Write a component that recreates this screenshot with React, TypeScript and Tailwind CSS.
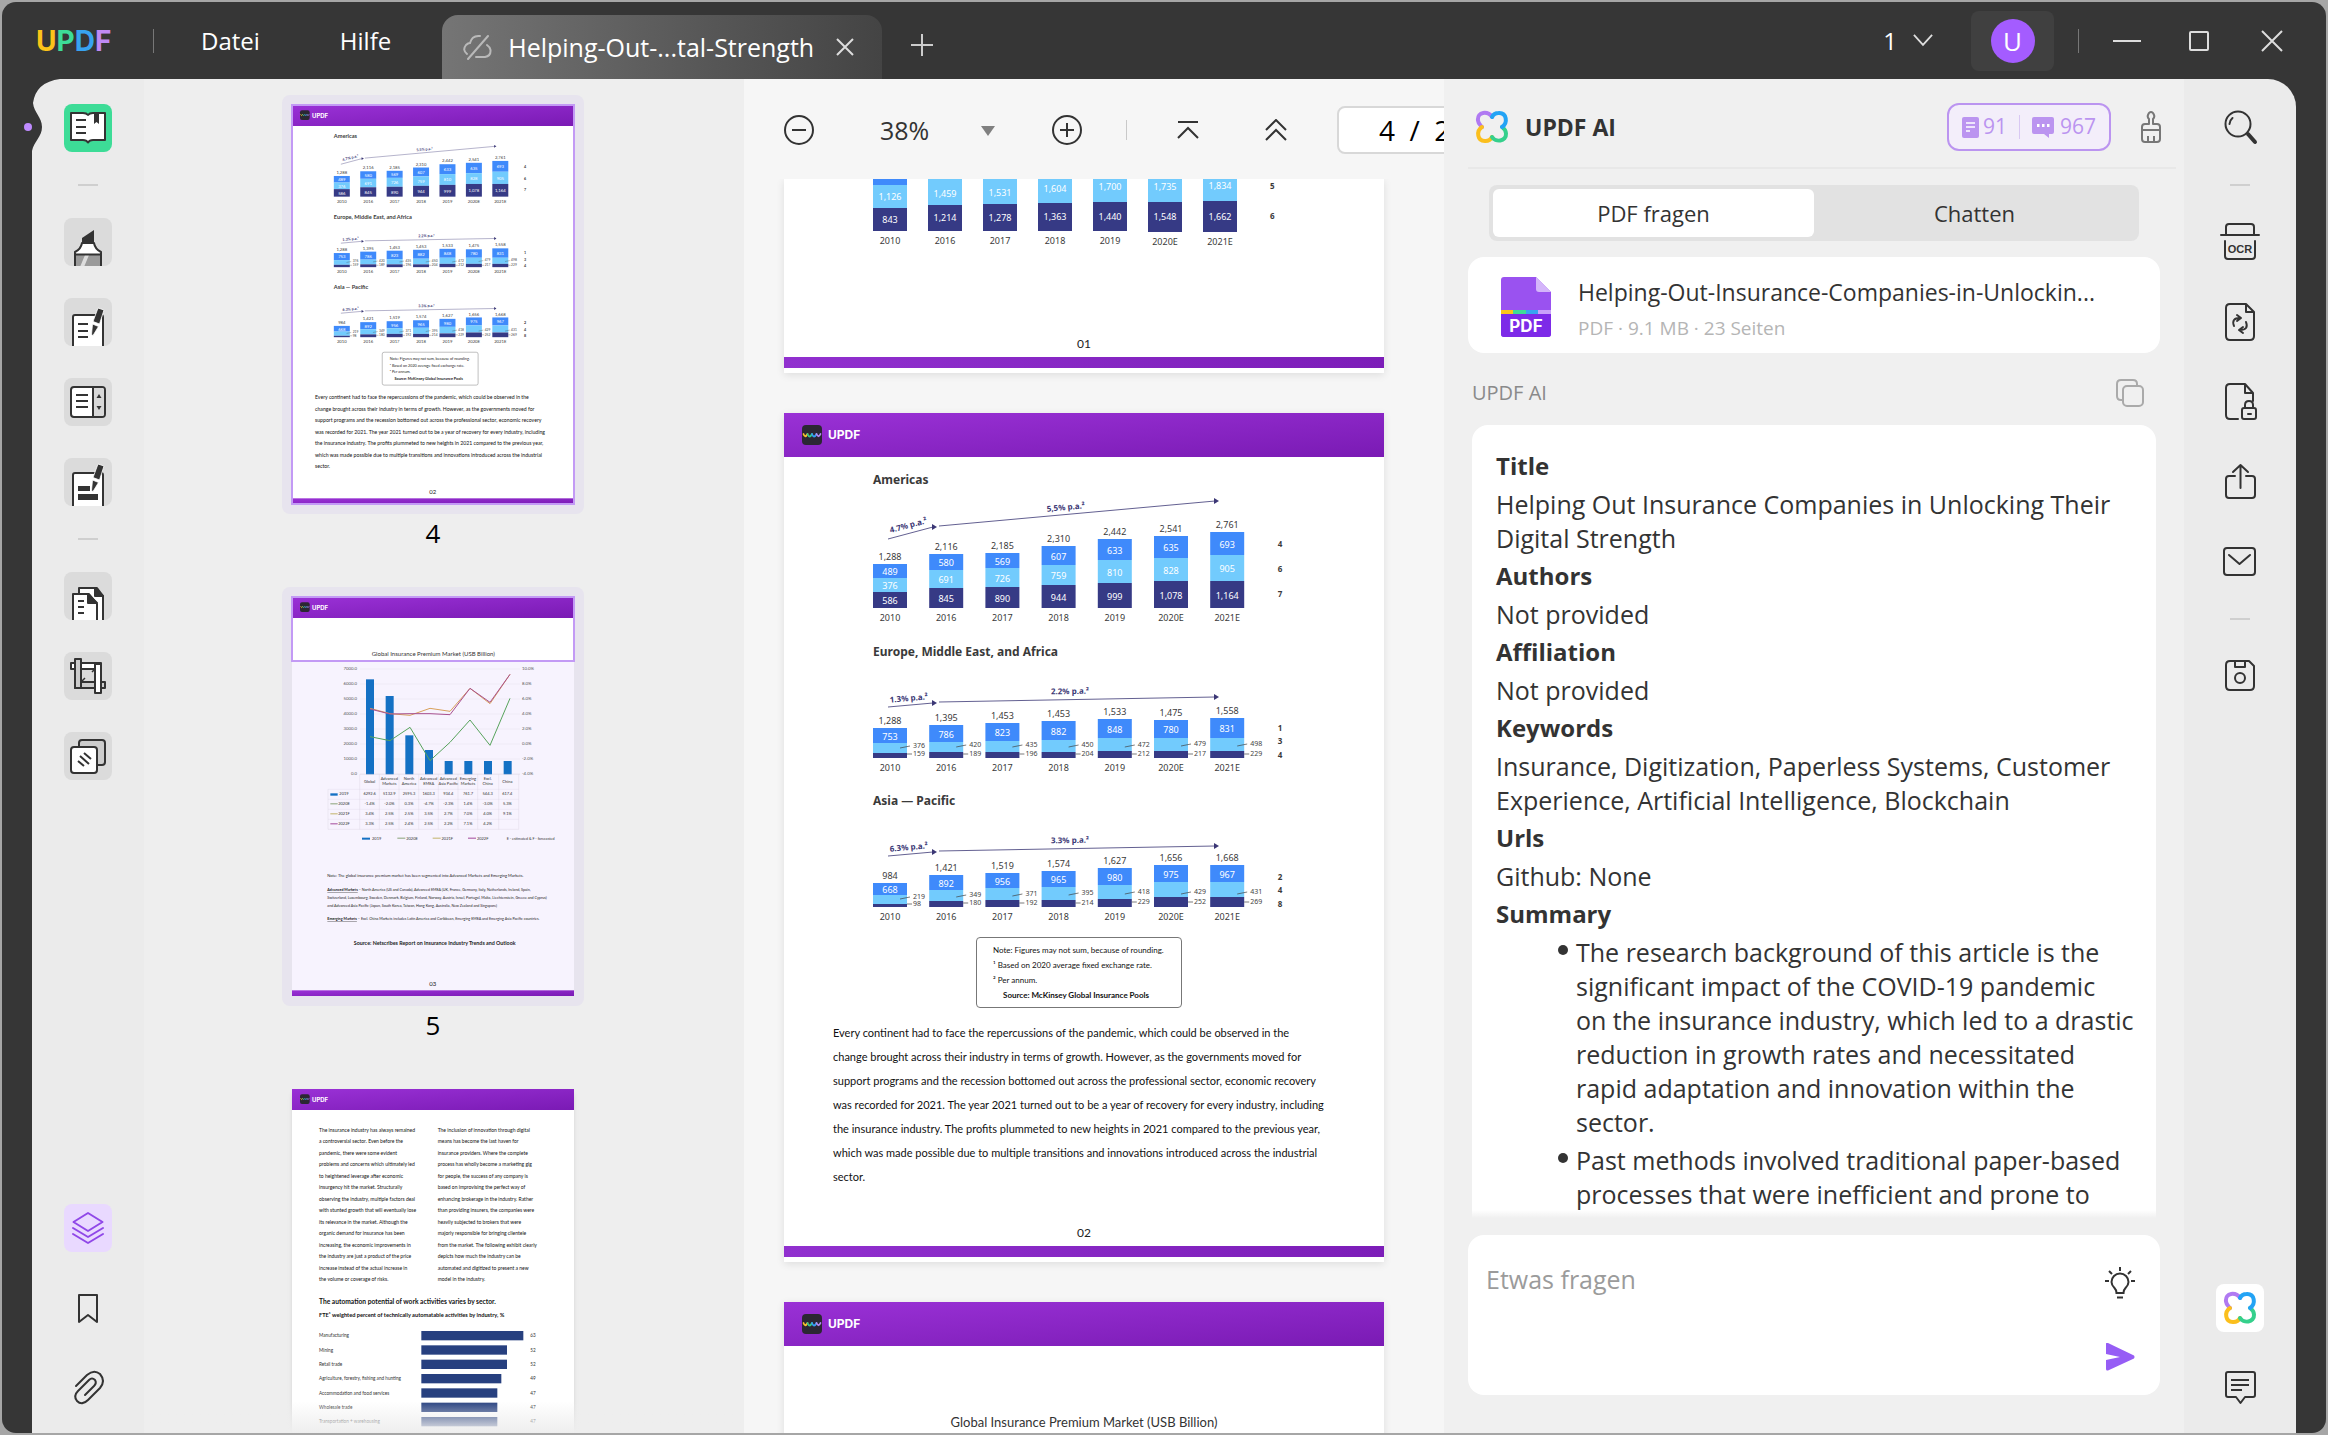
import { useState, type ReactNode } from 'react';

const SANS = "font-['Open_Sans','Noto_Sans',sans-serif]";

/* ---------- document data ---------- */

type Bar = { year: string; total: string; y: [number, number, number]; v: [string, string, string]; note?: [number, number] };
type Region = { title: string; top: number; base: number; growth: [string, string]; side: [string, string, string]; sideY: [number, number, number]; bars: Bar[] };

const regions: Region[] = [
  {
    title: 'Americas', top: 30, base: 121, growth: ['4.7% p.a.²', '5,5% p.a.²'], side: ['4', '6', '7'], sideY: [60, 85, 110],
    bars: [
      { year: '2010', total: '1,288', y: [77, 91, 105], v: ['489', '376', '586'] },
      { year: '2016', total: '2,116', y: [67, 83, 101], v: ['580', '691', '845'] },
      { year: '2017', total: '2,185', y: [66, 81, 100], v: ['569', '726', '890'] },
      { year: '2018', total: '2,310', y: [59, 78, 98], v: ['607', '759', '944'] },
      { year: '2019', total: '2,442', y: [52, 73, 96], v: ['633', '810', '999'] },
      { year: '2020E', total: '2,541', y: [49, 71, 94], v: ['635', '828', '1,078'] },
      { year: '2021E', total: '2,761', y: [45, 68, 94], v: ['693', '905', '1,164'] },
    ],
  },
  {
    title: 'Europe, Middle East, and Africa', top: 202, base: 99, growth: ['1.3% p.a.²', '2.2% p.a.²'], side: ['1', '3', '4'], sideY: [72, 85, 99],
    bars: [
      { year: '2010', total: '1,288', y: [69, 84, 94], v: ['753', '376', '159'], note: [89, 97] },
      { year: '2016', total: '1,395', y: [66, 83, 93], v: ['786', '420', '189'], note: [88, 97] },
      { year: '2017', total: '1,453', y: [64, 82, 93], v: ['823', '435', '196'], note: [88, 97] },
      { year: '2018', total: '1,453', y: [62, 81, 93], v: ['882', '450', '204'], note: [88, 97] },
      { year: '2019', total: '1,533', y: [60, 79, 92], v: ['848', '472', '212'], note: [88, 97] },
      { year: '2020E', total: '1,475', y: [61, 79, 92], v: ['780', '479', '217'], note: [87, 97] },
      { year: '2021E', total: '1,558', y: [59, 79, 92], v: ['831', '498', '229'], note: [87, 97] },
    ],
  },
  {
    title: 'Asia — Pacific', top: 351, base: 99, growth: ['6.3% p.a.²', '3.3% p.a.²'], side: ['2', '4', '8'], sideY: [72, 85, 99],
    bars: [
      { year: '2010', total: '984', y: [75, 87, 96], v: ['668', '219', '98'], note: [91, 98] },
      { year: '2016', total: '1,421', y: [67, 82, 93], v: ['892', '349', '180'], note: [89, 97] },
      { year: '2017', total: '1,519', y: [65, 80, 92], v: ['956', '371', '192'], note: [88, 97] },
      { year: '2018', total: '1,574', y: [63, 79, 92], v: ['965', '395', '214'], note: [87, 97] },
      { year: '2019', total: '1,627', y: [60, 77, 91], v: ['980', '418', '229'], note: [86, 96] },
      { year: '2020E', total: '1,656', y: [57, 74, 89], v: ['975', '429', '252'], note: [86, 96] },
      { year: '2021E', total: '1,668', y: [57, 74, 89], v: ['967', '431', '269'], note: [86, 96] },
    ],
  },
];

const worldBars = [
  { year: '2010', y: [6, 29, 52], v: ['1,126', '843'] },
  { year: '2016', y: [0, 26, 52], v: ['1,459', '1,214'] },
  { year: '2017', y: [0, 25, 52], v: ['1,531', '1,278'] },
  { year: '2018', y: [0, 24, 52], v: ['1,604', '1,363'] },
  { year: '2019', y: [0, 23, 52], v: ['1,700', '1,440'] },
  { year: '2020E', y: [0, 23, 53], v: ['1,735', '1,548'] },
  { year: '2021E', y: [0, 22, 53], v: ['1,834', '1,662'] },
];

const paragraph = [
  'Every continent had to face the repercussions of the pandemic, which could be observed in the',
  'change brought across their industry in terms of growth. However, as the governments moved for',
  'support programs and the recession bottomed out across the professional sector, economic recovery',
  'was recorded for 2021. The year 2021 turned out to be a year of recovery for every industry, including',
  'the insurance industry. The profits plummeted to new heights in 2021 compared to the previous year,',
  'which was made possible due to multiple transitions and innovations introduced across the industrial',
  'sector.',
];

const leftColumn = [
  'The insurance industry has always remained', 'a controversial sector. Even before the', 'pandemic, there were some evident',
  'problems and concerns which ultimately led', 'to heightened leverage after economic', 'insurgency hit the market. Structurally',
  'observing the industry, multiple factors deal', 'with stunted growth that will eventually lose', 'its relevance in the market. Although the',
  'organic demand for insurance has been', 'increasing, the economic improvements in', 'the industry are just a product of the price',
  'increase instead of the actual increase in', 'the volume or coverage of risks.',
];
const rightColumn = [
  'The inclusion of innovation through digital', 'means has become the last haven for', 'insurance providers. Where the complete',
  'process has wholly become a marketing gig', 'for people, the success of any company is', 'based on improvising the perfect way of',
  'enhancing brokerage in the industry. Rather', 'than providing insurers, the companies were', 'heavily subjected to brokers that were',
  'majorly responsible for bringing clientele', 'from the market. The following exhibit clearly', 'depicts how much the industry can be',
  'automated and digitized to present a new', 'model in the industry.',
];
const sectors: [string, number, string][] = [
  ['Manufacturing', 306, '63'], ['Mining', 257, '52'], ['Retail trade', 257, '52'], ['Agriculture, forestry, fishing and hunting', 240, '49'],
  ['Accommodation and food services', 228, '47'], ['Wholesale trade', 228, '47'], ['Transportation + warehousing', 228, '47'],
];

/* ---------- document drawings ---------- */

function GrowthArrow({ x1, y1, x2, y2 }: { x1: number; y1: number; x2: number; y2: number }) {
  return (
    <g stroke="#3b3775" fill="#3b3775">
      <line x1={x1} y1={y1} x2={x2} y2={y2} strokeWidth="0.8" />
      <path d={`M${x2 - 1} ${y2 - 3}l5 3l-5 3z`} stroke="none" />
    </g>
  );
}

function RegionChart({ r }: { r: Region }) {
  const steep = r.title === 'Americas';
  return (
    <g transform={`translate(0 ${r.top})`}>
      <text x="89" y="-3" className="text-[12px] font-bold" fill="#3a3a3a">{r.title}</text>
      <GrowthArrow x1={104} y1={steep ? 52 : 48} x2={149} y2={steep ? 40 : 44} />
      <GrowthArrow x1={155} y1={steep ? 39 : 43} x2={431} y2={steep ? 14 : 38} />
      <g className="text-[8px] font-bold" fill="#3b3775" textAnchor="middle">
        <text x="125" y={steep ? 41 : 42} transform={steep ? 'rotate(-15 125 41)' : 'rotate(-5 125 42)'}>{r.growth[0]}</text>
        <text x={steep ? 282 : 286} y={steep ? 23 : 35} transform={steep ? 'rotate(-5 282 23)' : 'rotate(-1 286 35)'}>{r.growth[1]}</text>
      </g>
      {r.bars.map((b, i) => {
        const x = 89 + i * 56.2;
        const [a, c, d] = b.y;
        return (
          <g key={b.year} className="text-[9px]" textAnchor="middle" fill="#fff">
            <rect x={x} y={a} width="34" height={c - a} fill="#3f8afb" />
            <rect x={x} y={c} width="34" height={d - c} fill="#72cbfd" />
            <rect x={x} y={d} width="34" height={r.base - d} fill="#363a85" />
            <text x={x + 17} y={(a + c) / 2 + 4}>{b.v[0]}</text>
            {b.note ? (
              <g className="text-[7px]" fill="#444" textAnchor="start">
                <path d={`M${x + 27} ${b.note[0]}L${x + 37} ${b.note[0] - 2}M${x + 34} ${b.note[1] - 2}h5`} stroke="#444" strokeWidth="0.7" />
                <text x={x + 40} y={b.note[0]}>{b.v[1]}</text>
                <text x={x + 40} y={b.note[1]}>{b.v[2]}</text>
              </g>
            ) : (
              <>
                <text x={x + 17} y={(c + d) / 2 + 4}>{b.v[1]}</text>
                <text x={x + 17} y={(d + r.base) / 2 + 4}>{b.v[2]}</text>
              </>
            )}
            <text x={x + 17} y={a - 4} fill="#3a3a3a">{b.total}</text>
            <text x={x + 17} y={r.base + 13} fill="#3a3a3a">{b.year}</text>
          </g>
        );
      })}
      {r.side.map((s, i) => (
        <text key={i} x="496" y={r.sideY[i]} textAnchor="middle" className="text-[8px] font-bold" fill="#3a3a3a">{s}</text>
      ))}
    </g>
  );
}

function Wave() {
  return (
    <g>
      <rect width="20" height="20" rx="4" fill="#2b2733" />
      <g fill="none" strokeWidth="1.8" strokeLinecap="round">
        <path d="M1.500 9q1.500 4.500 4 0" stroke="#fbc02d" />
        <path d="M5.500 9q2 5 4.500 0" stroke="#34c98a" />
        <path d="M10 9q2 5 4.500 0" stroke="#35a0f4" />
        <path d="M14.500 9q2 4.500 4 0" stroke="#b68cf5" />
      </g>
    </g>
  );
}

function PageHeader() {
  return (
    <header className="flex h-11 items-center gap-[6px] bg-linear-to-br from-[#9a31d6] to-[#7a1ab4] pl-[18px] font-['Inter',sans-serif] text-[12px] font-bold text-white">
      <svg viewBox="0 0 20 20" className="size-5"><Wave /></svg>
      UPDF
    </header>
  );
}

function PageFooter({ no }: { no: string }) {
  return (
    <footer className="text-center text-[12px] leading-5 text-[#222]">
      {no}
      <div className="mt-[3px] mb-[5px] h-[11px] bg-linear-to-r from-[#9130cf] to-[#7c1db8]" />
    </footer>
  );
}

// header and footer bands of a thumbnail, in the 846 x 1197 space all of them share
function ThumbFrame({ no, children }: { no: string; children: ReactNode }) {
  return (
    <svg viewBox="0 0 846 1197" className="block w-full font-['Lato',sans-serif]">
      <defs>
        <linearGradient id={`band${no}`} x1="0" y1="0" x2="1" y2="1">
          <stop offset="0" stopColor="#9a31d6" />
          <stop offset="1" stopColor="#7a1ab4" />
        </linearGradient>
      </defs>
      {children}
      <rect width="846" height="63" fill={`url(#band${no})`} />
      <g transform="translate(24 16) scale(1.45)"><Wave /></g>
      <text x="60" y="39" className="font-['Inter',sans-serif] text-[18px] font-bold" fill="#fff">UPDF</text>
      <text x="422" y="1168" textAnchor="middle" className="text-[18px]" fill="#222">{no}</text>
      <rect y="1180" width="846" height="17" fill={`url(#band${no})`} />
    </svg>
  );
}

function Thumb02() {
  return (
    <ThumbFrame no="02">
      <g transform="scale(1.41)">
        <g transform="translate(0 44)">{regions.map(r => <RegionChart key={r.title} r={r} />)}</g>
        <rect x="192" y="526" width="204" height="70" rx="4" fill="none" stroke="#777" />
        <g className="text-[8px]" fill="#222">
          <text x="208" y="542">Note: Figures may not sum, because of rounding.</text>
          <text x="208" y="557">¹ Based on 2020 average fixed exchange rate.</text>
          <text x="208" y="571">² Per annum.</text>
          <text x="218" y="586" className="font-bold">Source: McKinsey Global Insurance Pools</text>
        </g>
        {paragraph.map((l, i) => <text key={i} x="49" y={626 + i * 24.5} className="text-[11px]" fill="#111">{l}</text>)}
      </g>
    </ThumbFrame>
  );
}

const line = (ys: number[]) => ys.map((y, i) => `${234 + i * 60},${y}`).join(' ');
const marketCols = ['Global', 'Advanced|Markets', 'North|America', 'Advanced|EMEA', 'Advanced|Asia Pacific', 'Emerging|Markets', 'Excl.|China', 'China'];
const marketRows: [string, string, string[]][] = [
  ['2019', '#1471c4', ['6292.6', '5132.9', '2595.3', '1603.3', '934.4', '761.7', '544.3', '617.4']],
  ['2020E', '#8aa37a', ['-1.4%', '-2.0%', '0.3%', '-4.7%', '-2.3%', '1.4%', '-3.0%', '5.3%']],
  ['2021F', '#c2b46a', ['3.4%', '2.5%', '2.5%', '3.5%', '2.7%', '7.0%', '4.0%', '9.1%']],
  ['2022F', '#a3499a', ['3.3%', '2.5%', '2.4%', '2.5%', '2.2%', '7.1%', '4.2%', '']],
];

function Thumb03() {
  return (
    <ThumbFrame no="03">
      <rect y="190" width="846" height="1007" fill="#f7f3fe" />
      <text x="424" y="176" textAnchor="middle" className="text-[18px]" fill="#333">Global Insurance Premium Market (USB Billion)</text>
      <g className="text-[13px]" fill="#555">
        {['7000.0', '6000.0', '5000.0', '4000.0', '3000.0', '2000.0', '1000.0', '0.0'].map((t, i) => (
          <g key={t}>
            <line x1="204" x2="684" y1={216 + i * 45} y2={216 + i * 45} stroke="#e2dcea" />
            <text x="195" y={220 + i * 45} textAnchor="end">{t}</text>
            <text x="690" y={220 + i * 45}>{['10.0%', '8.0%', '6.0%', '4.0%', '2.0%', '0.0%', '-2.0%', '-4.0%'][i]}</text>
          </g>
        ))}
      </g>
      {[247, 297, 415, 459, 492, 492, 492, 492].map((y, i) => <rect key={i} x={222 + i * 59} y={y} width="24" height={532 - y} fill="#1471c4" />)}
      <g fill="none" strokeWidth="3">
        <polyline points={line([334, 350, 355, 334, 343, 274, 320, 232])} stroke="#d9a15c" />
        <polyline points={line([336, 351, 350, 350, 353, 274, 316, 232])} stroke="#a8508f" />
        <polyline points={line([419, 431, 391, 491, 436, 369, 445, 304])} stroke="#57a35c" />
      </g>
      <g className="text-[12px]" fill="#333" textAnchor="middle">
        {marketCols.map((c, i) => c.split('|').map((w, k) => <text key={c + k} x={233 + i * 59} y={(c.includes('|') ? 550 : 558) + k * 14}>{w}</text>))}
        {marketRows.map(([name, color, cells], r) => (
          <g key={name}>
            <path d={`M108 ${577 + r * 30}H680`} stroke="#ddd6e6" />
            <rect x="115" y={589 + r * 30} width="22" height={r ? 3 : 7} fill={color} />
            <text x="156" y={595 + r * 30}>{name}</text>
            {cells.map((c, i) => <text key={i} x={233 + i * 59} y={595 + r * 30}>{c}</text>)}
            <rect x={210 + r * 106} y={722} width="24" height={r ? 3 : 6} fill={color} />
            <text x={254 + r * 106} y="729">{name}</text>
          </g>
        ))}
        <path d="M108 697H680M108 577V697M203 532V697M262 532V697M321 532V697M380 532V697M439 532V697M498 532V697M557 532V697M620 532V697M680 532V697M204 532H684" stroke="#d5cedf" />
        <text x="716" y="729" className="text-[11px]">E - estimated & F - forecasted</text>
      </g>
      <g className="text-[11px]" fill="#222">
        <text x="106" y="840" className="text-[12px]">Note: The global insurance premium market has been segmented into Advanced Markets and Emerging Markets.</text>
        <text x="106" y="882"><tspan className="font-bold underline">Advanced Markets</tspan> – North America (US and Canada), Advanced EMEA (UK, France, Germany, Italy, Netherlands, Ireland, Spain,</text>
        <text x="106" y="905">Switzerland, Luxembourg, Sweden, Denmark, Belgium, Finland, Norway, Austria, Israel, Portugal, Malta, Liechtenstein, Greece and Cyprus)</text>
        <text x="106" y="930">and Advanced Asia Pacific (Japan, South Korea, Taiwan, Hong Kong, Australia, New Zealand and Singapore)</text>
        <text x="106" y="970"><tspan className="font-bold underline">Emerging Markets</tspan> – Excl. China Markets includes Latin America and Caribbean, Emerging EMEA and Emerging Asia Pacific countries.</text>
      </g>
      <text x="428" y="1044" textAnchor="middle" className="text-[16px] font-bold" fill="#222">Source: Netscribes Report on Insurance Industry Trends and Outlook</text>
    </ThumbFrame>
  );
}

function Thumb04() {
  return (
    <ThumbFrame no="04">
      <g className="text-[15px]" fill="#111">
        {leftColumn.map((l, i) => <text key={i} x="81" y={129 + i * 34.4}>{l}</text>)}
        {rightColumn.map((l, i) => <text key={i} x="437" y={129 + i * 34.4}>{l}</text>)}
      </g>
      <text x="81" y="645" className="text-[20px] font-bold" fill="#111">The automation potential of work activities varies by sector.</text>
      <text x="81" y="685" className="text-[17px] font-bold" fill="#111">FTE¹ weighted percent of technically automatable activities by industry, %</text>
      {sectors.map(([name, w, v], i) => (
        <g key={name} className="text-[14px]" fill="#333">
          <text x="81" y={745 + i * 43}>{name}</text>
          <rect x="388" y={726 + i * 43} width={w} height="28" fill="#27407f" />
          <text x="715" y={745 + i * 43}>{v}</text>
        </g>
      ))}
    </ThumbFrame>
  );
}

/* ---------- icons ---------- */

function Clover({ className }: { className: string }) {
  return (
    <svg viewBox="0 0 34 34" className={className} fill="none" strokeWidth="4" strokeLinecap="round">
      <path d="M17 7C13 1 2 1 3 10.500C3.300 14 5 15 7 17" stroke="#b07af2" />
      <path d="M7 17C1 21 2 31.500 10.500 31C14 31 16 29 17 27" stroke="#fbbf1d" />
      <path d="M17 27C20 32.500 31.500 32 31 23.500C31 20 29 18.500 27 17" stroke="#35d08c" />
      <path d="M27 17C33 13 32 2.500 23.500 3C20 3 18 5 17 7" stroke="#23a3f5" />
    </svg>
  );
}

const Pen = ({ dy = 0 }: { dy?: number }) => (
  <g transform={`translate(0 ${dy})`} fill="#333" stroke="#fff" strokeWidth="0.8">
    <path d="M34 10l6 2-4.500 14-6.500-2.500zM28.500 26l6 2.500-5.500 9-1.500-1z" />
  </g>
);

const leftTools: { name: string; art: ReactNode }[] = [
  { name: 'Leser', art: <>
    <path d="M7 9h12q3.500 0 5 2q1.500-2 5-2h12v27h-12q-3.500 0-5 2.500q-1.500-2.500-5-2.500h-12z" fill="#fff" />
    <path d="M12 16h10M12 23h10M12 29h10" /><path d="M30 9h5v11l-2.500-2-2.500 2z" fill="#333" stroke="none" />
  </> },
  { name: 'Kommentar', art: <>
    <path d="M11 50V34q6-3 7-9h12q1 6 7 9v16z" fill="#fff" /><path d="M12 37h24v12h-24z" fill="#9a9a9a" stroke="none" />
    <path d="M16 49l5-12h4l-5 12z" fill="#ddd" stroke="none" /><path d="M11 36.500h26" /><path d="M18 25v-5l12-8v13z" fill="#333" stroke="none" />
  </> },
  { name: 'PDF bearbeiten', art: <>
    <rect x="9" y="17" width="30" height="40" rx="2" fill="#fff" /><path d="M14 26h10M14 33h10M14 39h10" /><Pen />
  </> },
  { name: 'Formular', art: <>
    <rect x="7" y="9" width="34" height="30" rx="3" fill="#fff" /><path d="M29 10h9q2 0 2 2v24q0 2-2 2h-9z" fill="#d8d8d8" stroke="none" />
    <path d="M29 9v30M12 17h12M12 23h12M12 29h12" /><path d="M32.500 20l2.500-4 2.500 4zM32.500 28l2.500 4 2.500-4z" fill="#333" stroke="none" />
  </> },
  { name: 'Schwärzen', art: <>
    <rect x="9" y="15" width="30" height="42" rx="2" fill="#fff" /><path d="M14 28h12v5h-12zM14 36h20v6h-20z" fill="#333" stroke="none" /><Pen dy={-4} />
  </> },
  { name: 'Seiten', art: <>
    <path d="M15 50V16h18l6 8v26z" fill="#fff" /><path d="M31 16v8h8z" fill="#333" /><path d="M9 50V22h16l8 10v18z" fill="#fff" /><path d="M24 22v9h9z" fill="#333" />
    <path d="M14 29h6M14 35h6M14 41h6" />
  </> },
  { name: 'Zuschneiden', art: <>
    <path d="M7 11h30v6h-30z" fill="#fff" /><path d="M11 30h30v6h-30z" fill="#ccc" /><path d="M11 7h6v29h-6z" fill="#ccc" /><path d="M31 12h6v29h-6z" fill="#fff" /><path d="M17 30l4-4M31 17l-3 3" strokeWidth="1.500" />
  </> },
  { name: 'Stapel', art: <>
    <rect x="15" y="8" width="26" height="25" rx="3" fill="#ccc" /><rect x="7" y="15" width="26" height="26" rx="3" fill="#fff" />
    <path d="M20 21l7 6M16 24l9 8M14 29l6 5" />
  </> },
];

function LeftTool({ i }: { i: number }) {
  const t = leftTools[i];
  return (
    <button aria-label={t.name} className={`size-12 shrink-0 overflow-hidden rounded-lg ${i === 0 ? 'bg-[#3ddc97]' : 'bg-[#dbdbdb]'}`}>
      <svg viewBox="0 0 48 48" className="size-12" fill="none" stroke="#333" strokeWidth="2" strokeLinejoin="round">{t.art}</svg>
    </button>
  );
}

const rightTools: { name: string; art: ReactNode }[] = [
  { name: 'Suche', art: <><circle cx="22" cy="20" r="12.500" /><path d="M13.500 20a8.500 8.500 0 0 1 3-6" /><path d="M32 30l7 8" strokeWidth="4" /></> },
  { name: 'OCR', art: <>
    <path d="M10 16V9q0-3 3-3h22q3 0 3 3v7M5 17h38M9 23v15q0 3 3 3h24q3 0 3-3V23" />
    <text x="24" y="35" textAnchor="middle" className="font-['Liberation_Sans',sans-serif] text-[11px] font-bold" fill="#333" stroke="none">OCR</text>
  </> },
  { name: 'Konvertieren', art: <><path d="M30 6H14q-4 0-4 4v28q0 4 4 4h20q4 0 4-4V14zM30 6v8h8" /><path d="M18 28q-3-8 6-8M21 17l4 3-4 3M30 24q3 8-6 8M27 35l-4-3 4-3" /></> },
  { name: 'Schützen', art: <><path d="M22 41h-8q-4 0-4-4V10q0-4 4-4h15l8 9v8M29 6v9h8" /><rect x="26" y="30" width="14" height="11" rx="2" /><path d="M29 30v-3q0-4 4-4t4 4v3M32 36h3" /></> },
  { name: 'Teilen', art: <><path d="M19 18h-6q-3 0-3 3v16q0 3 3 3h23q3 0 3-3V21q0-3-3-3h-6M24.500 30V7M17 14l7.500-7 7.500 7" /></> },
  { name: 'E-Mail', art: <><rect x="8" y="10" width="31" height="27" rx="3" /><path d="M13 17l10.500 9 10.500-9" /></> },
  { name: 'Speichern', art: <><path d="M14 9h19l5 5v20q0 4-4 4H14q-4 0-4-4V13q0-4 4-4zM19 9v6h10V9" /><circle cx="24" cy="26" r="5" /></> },
];

function RightTool({ i }: { i: number }) {
  return (
    <button aria-label={rightTools[i].name} className="size-12 shrink-0">
      <svg viewBox="0 0 48 48" className="size-12" fill="none" stroke="#333" strokeWidth="2" strokeLinecap="round" strokeLinejoin="round">{rightTools[i].art}</svg>
    </button>
  );
}

const Dash = () => <div className="h-[2px] w-5 shrink-0 bg-[#cfcfcf]" />;

/* ---------- window parts ---------- */

function TitleBar() {
  return (
    <header className="flex h-[77px] shrink-0 items-center pl-[34px] text-[24px] leading-8 text-white">
      <div className="w-[77px] font-['Inter',sans-serif] text-[28px] font-bold">
        <span className="text-[#fcc419]">U</span><span className="text-[#3ddc97]">P</span><span className="text-[#38a3f1]">D</span><span className="text-[#c08af5]">F</span>
      </div>
      <div className="ml-10 h-6 w-px bg-[#777]" />
      <button className="ml-[47px]">Datei</button>
      <button className="ml-20">Hilfe</button>
      <div className="ml-[51px] flex h-16 w-[440px] items-center self-end rounded-t-2xl bg-linear-to-r from-[#757575] to-[#444] pl-5 text-[25px]">
        <svg viewBox="0 0 30 26" className="w-[30px] shrink-0" fill="none" stroke="#b9b9b9" strokeWidth="2" strokeLinecap="round">
          <path d="M6 25L26 2M5 20q-5-4-1-9q2-2 4-2q2-8 10-7M14 23h9q6-1 5.500-7q-.5-3-3.500-5" />
        </svg>
        <span className="ml-4 flex-1 whitespace-nowrap">Helping-Out-...tal-Strength</span>
        <button aria-label="Tab schließen" className="mr-7">
          <svg viewBox="0 0 18 18" className="size-[18px]" stroke="#ddd" strokeWidth="2"><path d="M1 1l16 16M17 1L1 17" /></svg>
        </button>
      </div>
      <button aria-label="Neuer Tab" className="ml-7">
        <svg viewBox="0 0 24 24" className="mt-2 size-6" stroke="#ccc" strokeWidth="2"><path d="M1 12h22M12 1v22" /></svg>
      </button>
      <div className="ml-auto flex items-center pr-[43px]">
        <button className="flex items-center gap-4">1
          <svg viewBox="0 0 22 14" className="w-5" fill="none" stroke="#ddd" strokeWidth="2"><path d="M1 1l10 11L21 1" /></svg>
        </button>
        <button aria-label="Konto" className="ml-[38px] flex h-[60px] w-[83px] items-center justify-center rounded-lg bg-[#404040]">
          <span className="flex size-11 items-center justify-center rounded-full bg-[#a45cff] text-[26px]">U</span>
        </button>
        <div className="ml-6 h-6 w-px bg-[#777]" />
        <button aria-label="Minimieren" className="ml-[34px] h-[2px] w-7 bg-[#ddd]" />
        <button aria-label="Maximieren" className="ml-12 size-5 rounded-[2px] border-2 border-[#ddd]" />
        <button aria-label="Schließen" className="ml-[52px]">
          <svg viewBox="0 0 22 22" className="size-[22px]" stroke="#ddd" strokeWidth="2"><path d="M1 1l20 20M21 1L1 21" /></svg>
        </button>
      </div>
    </header>
  );
}

function LeftRail() {
  return (
    <nav className="relative flex w-28 shrink-0 flex-col items-center bg-[#ebebeb] pt-[25px]">
      <svg viewBox="0 0 60 80" className="absolute top-0 -left-5 w-[60px]">
        <path d="M0 0H48Q24 3 21 24C22 34 30 38 30 48C30 58 22 62 20 72H0z" fill="#363636" />
        <circle cx="16" cy="48" r="4" fill="#bf8bff" />
      </svg>
      <div className="flex flex-col items-center gap-8">
        <LeftTool i={0} />
        <Dash />
        {[1, 2, 3, 4].map(i => <LeftTool key={i} i={i} />)}
        <Dash />
        {[5, 6, 7].map(i => <LeftTool key={i} i={i} />)}
      </div>
      <div className="mt-auto mb-[21px] flex flex-col gap-8">
        <button aria-label="Miniaturansichten" className="size-12 rounded-lg bg-[#e9d9ff]">
          <svg viewBox="0 0 48 48" className="size-12" fill="none" stroke="#9048e8" strokeWidth="2" strokeLinecap="round" strokeLinejoin="round">
            <path d="M24 9l14.500 9L24 27 9.500 18zM9 24l15 9 15-9M9 30l15 9 15-9" />
          </svg>
        </button>
        <button aria-label="Lesezeichen" className="size-12">
          <svg viewBox="0 0 48 48" className="size-12" fill="none" stroke="#333" strokeWidth="2" strokeLinejoin="round"><path d="M15 11h18v27l-9-7-9 7z" /></svg>
        </button>
        <button aria-label="Anhänge" className="size-12">
          <svg viewBox="0 0 48 48" className="size-12" fill="none" stroke="#333" strokeWidth="2" strokeLinecap="round">
            <path d="M12 22L23 11Q30 5 36 10Q42 17 36 24L24 36Q18 42 13 37Q9 32 14 27L25 16Q28 13 31 16Q33 19 30 22L21 31" />
          </svg>
        </button>
      </div>
    </nav>
  );
}

function Thumbnails() {
  return (
    <aside className="relative w-[600px] shrink-0 overflow-hidden bg-[#eee] pt-4 pl-[138px] text-center text-[26px] text-black">
      <figure className="w-[302px]">
        <div className="rounded-lg bg-[#e7e4ee] p-[10px]"><div className="bg-white outline-2 -outline-offset-1 outline-[#c39af5]"><Thumb02 /></div></div>
        <figcaption className="h-[73px] leading-[38px]">4</figcaption>
      </figure>
      <figure className="w-[302px]">
        <div className="rounded-lg bg-[#e7e4ee] p-[10px]">
          <div className="relative bg-white"><Thumb03 /><div className="absolute inset-x-0 top-0 h-16 outline-2 -outline-offset-1 outline-[#c39af5]" /></div>
        </div>
        <figcaption className="h-[73px] leading-[38px]">5</figcaption>
      </figure>
      <figure className="w-[302px] p-[10px]"><div className="bg-white shadow-md"><Thumb04 /></div></figure>
      <div className="absolute inset-x-0 bottom-0 h-8 bg-linear-to-b from-transparent to-[#eee]" />
    </aside>
  );
}

function Toolbar() {
  const [zoom, setZoom] = useState('38');
  const [page, setPage] = useState('4  /  23');
  return (
    <div className="flex h-[100px] shrink-0 items-center overflow-hidden pt-[2px] pl-10 text-[#333]">
      <button aria-label="Verkleinern" className="shrink-0">
        <svg viewBox="0 0 30 30" className="size-[30px]" fill="none" stroke="currentColor" strokeWidth="2"><circle cx="15" cy="15" r="14" /><path d="M8 15h14" /></svg>
      </button>
      <div className="relative ml-16 w-[121px] shrink-0">
        <select aria-label="Zoom" value={zoom} onChange={e => setZoom(e.target.value)} className="w-full appearance-none bg-transparent pl-[2px] text-[25px] leading-8 outline-none">
          <option value="38">38%</option>
          <option value="100">100%</option>
        </select>
        <svg viewBox="0 0 14 10" className="pointer-events-none absolute top-3 right-1 w-[14px]" fill="#808080"><path d="M0 0h14L7 10z" /></svg>
      </div>
      <button aria-label="Vergrößern" className="ml-[53px] shrink-0">
        <svg viewBox="0 0 30 30" className="size-[30px]" fill="none" stroke="currentColor" strokeWidth="2"><circle cx="15" cy="15" r="14" /><path d="M8 15h14M15 8v14" /></svg>
      </button>
      <div className="ml-11 h-5 w-px shrink-0 bg-[#c9c9c9]" />
      <button aria-label="Erste Seite" className="ml-[50px] shrink-0">
        <svg viewBox="0 0 22 18" className="w-[22px]" fill="none" stroke="currentColor" strokeWidth="2"><path d="M1 1h20M1 17L11 7l10 10" /></svg>
      </button>
      <button aria-label="Vorherige Seite" className="ml-[66px] shrink-0">
        <svg viewBox="0 0 22 22" className="w-[22px]" fill="none" stroke="currentColor" strokeWidth="2"><path d="M1 11L11 1l10 10M1 21l10-10 10 10" /></svg>
      </button>
      <input aria-label="Seite" value={page} onChange={e => setPage(e.target.value)}
        className="ml-[50px] h-12 w-[200px] shrink-0 rounded-lg border-2 border-[#d8d8d8] bg-white px-10 text-[28px] text-black outline-none" />
    </div>
  );
}

function Viewer() {
  return (
    <main className="flex min-w-0 flex-1 flex-col overflow-hidden bg-[#f6f6f6]">
      <Toolbar />
      <div className="flex min-h-0 flex-1 flex-col gap-10 overflow-hidden pl-10 font-['Lato',sans-serif]">
        <article className="w-[600px] shrink-0 bg-white shadow-[0_2px_8px_rgba(0,0,0,0.1)]">
          <svg viewBox="0 0 600 155" className="block w-full font-['Noto_Sans',sans-serif]">
            {worldBars.map((b, i) => {
              const x = 89 + i * 55;
              const [a, c, d] = b.y;
              return (
                <g key={b.year} className="text-[9px]" fill="#fff" textAnchor="middle">
                  <rect x={x} y="0" width="34" height={a} fill="#3f8afb" />
                  <rect x={x} y={a} width="34" height={c - a} fill="#72cbfd" />
                  <rect x={x} y={c} width="34" height={d - c} fill="#363a85" />
                  <text x={x + 17} y={[21, 18, 17, 13, 11, 11, 10][i]}>{b.v[0]}</text>
                  <text x={x + 17} y={(c + d) / 2 + 3}>{b.v[1]}</text>
                  <text x={x + 17} y={d + 13} fill="#3a3a3a">{b.year}</text>
                </g>
              );
            })}
            <g className="text-[8px] font-bold" fill="#3a3a3a"><text x="486" y="10">5</text><text x="486" y="40">6</text></g>
          </svg>
          <PageFooter no="01" />
        </article>

        <article className="w-[600px] shrink-0 bg-white shadow-[0_2px_8px_rgba(0,0,0,0.1)]">
          <PageHeader />
          <svg viewBox="0 0 600 480" className="block w-full font-['Noto_Sans',sans-serif]">
            {regions.map(r => <RegionChart key={r.title} r={r} />)}
          </svg>
          <div className="ml-48 flex h-[71px] w-[206px] flex-col justify-center rounded border border-[#777] pl-4 text-[8px] leading-[15px] whitespace-nowrap text-[#111]">
            <p>Note: Figures may not sum, because of rounding.</p>
            <p>¹ Based on 2020 average fixed exchange rate.</p>
            <p>² Per annum.</p>
            <p className="pl-[10px] font-bold">Source: McKinsey Global Insurance Pools</p>
          </div>
          <p className="mt-[13px] mb-[34px] pl-[49px] text-[11px] leading-6 text-[#111]">
            {paragraph.map(l => <span key={l} className="block whitespace-nowrap">{l}</span>)}
          </p>
          <PageFooter no="02" />
        </article>

        <article className="h-[849px] w-[600px] shrink-0 bg-white shadow-[0_2px_8px_rgba(0,0,0,0.1)]">
          <PageHeader />
          <h2 className="mt-[66px] text-center text-[13px] leading-5 text-[#333]">Global Insurance Premium Market (USB Billion)</h2>
        </article>
      </div>
    </main>
  );
}

const sections = [
  { head: 'Title', body: 'Helping Out Insurance Companies in Unlocking Their\nDigital Strength' },
  { head: 'Authors', body: 'Not provided' },
  { head: 'Affiliation', body: 'Not provided' },
  { head: 'Keywords', body: 'Insurance, Digitization, Paperless Systems, Customer\nExperience, Artificial Intelligence, Blockchain' },
  { head: 'Urls', body: 'Github: None' },
];
const bullets = [
  'The research background of this article is the\nsignificant impact of the COVID-19 pandemic\non the insurance industry, which led to a drastic\nreduction in growth rates and necessitated\nrapid adaptation and innovation within the\nsector.',
  'Past methods involved traditional paper-based\nprocesses that were inefficient and prone to',
];

function AiPanel() {
  const [tab, setTab] = useState(0);
  return (
    <section className="flex w-[740px] shrink-0 flex-col bg-[#f0f0f0] px-6 text-[#333]">
      <div className="-mr-4 flex h-[90px] shrink-0 items-center border-b-2 border-[#e8e8e8] pt-2 pl-[7px]">
        <Clover className="size-[34px]" />
        <h1 className="ml-4 text-[23px] font-bold">UPDF AI</h1>
        <div className="ml-auto flex h-12 w-[164px] items-center rounded-xl border-2 border-[#bb94f0] bg-[#f3eefa] pl-[13px] text-[21px] text-[#bb94f0]">
          <svg viewBox="0 0 17 21" className="w-[17px]" fill="#bb94f0"><rect width="17" height="21" rx="2" /><path d="M4 6h9M4 10h9M4 14h4" stroke="#fff" strokeWidth="1.500" /></svg>
          <span className="ml-1">91</span>
          <div className="ml-3 h-6 w-px bg-[#d9c8f3]" />
          <svg viewBox="0 0 22 21" className="ml-3 w-[22px]" fill="#bb94f0"><path d="M2 0h18q2 0 2 2v13q0 2-2 2h-3v4l-5-4H2q-2 0-2-2V2q0-2 2-2z" /><path d="M5 8.500h2.500M10 8.500h2.500M15 8.500h2.500" stroke="#fff" strokeWidth="3" /></svg>
          <span className="ml-[6px]">967</span>
        </div>
        <button aria-label="Verlauf leeren" className="mr-[14px] ml-[29px]">
          <svg viewBox="0 0 22 32" className="w-[22px]" fill="none" stroke="#777" strokeWidth="2" strokeLinejoin="round">
            <path d="M9 13V8q-2-2-1-4q1-3 3-3t3 3q1 2-1 4v5h4q3 0 3 3v12q0 3-3 3H5q-3 0-3-3V16q0-3 3-3zM2 19h18M8 31v-6M14 31v-6" />
          </svg>
        </button>
      </div>

      <div className="mx-[21px] mt-4 flex h-14 shrink-0 rounded-lg bg-[#e2e2e2] p-1 text-[22px]">
        {['PDF fragen', 'Chatten'].map((t, i) => (
          <button key={t} onClick={() => setTab(i)} className={`flex-1 rounded-md ${tab === i ? 'bg-white' : ''}`}>{t}</button>
        ))}
      </div>

      <div className="mt-4 flex h-24 shrink-0 items-center rounded-2xl bg-white pl-[33px]">
        <svg viewBox="0 0 50 60" className="mt-1 w-[50px]">
          <path d="M3 0h32l15 15v42q0 3-3 3H3q-3 0-3-3V3q0-3 3-3z" fill="#9a52f0" />
          <path d="M35 0l15 15H38q-3 0-3-3z" fill="#d4b5fa" />
          <path d="M0 37h50v20q0 3-3 3H3q-3 0-3-3z" fill="#7d2ae8" />
          <path d="M0 33h12v4H0z" fill="#fcc419" /><path d="M12 33h13v4H12z" fill="#3ddc97" /><path d="M25 33h12v4H25z" fill="#38a3f1" /><path d="M37 33h13v4H37z" fill="#c9a1fa" />
          <text x="25" y="55" textAnchor="middle" className="font-['Inter',sans-serif] text-[17px] font-bold" fill="#fff">PDF</text>
        </svg>
        <div className="ml-[27px] pt-[10px] leading-9 whitespace-nowrap">
          <p className="text-[23px]">Helping-Out-Insurance-Companies-in-Unlockin...</p>
          <p className="text-[19px] text-[#b5b5b5]">PDF · 9.1 MB · 23 Seiten</p>
        </div>
      </div>

      <div className="flex h-[72px] shrink-0 items-center justify-between pt-2 pr-4 pl-1 text-[20px] text-[#8a8a8a]">
        UPDF AI
        <button aria-label="Kopieren">
          <svg viewBox="0 0 28 28" className="size-7" fill="none" stroke="#aaa" strokeWidth="2"><path d="M7 21H5q-4 0-4-4V5q0-4 4-4h12q4 0 4 4v1" /><rect x="7" y="7" width="20" height="20" rx="4" /></svg>
        </button>
      </div>

      <div className="relative mx-1 min-h-0 flex-1 overflow-hidden rounded-t-2xl bg-white px-6 pt-6 text-[25px] leading-[34px] whitespace-pre-line">
        {sections.map(s => (
          <div key={s.head}>
            <h2 className="mb-1 text-[24px] font-bold">{s.head}</h2>
            <p className="mb-1">{s.body}</p>
          </div>
        ))}
        <h2 className="mb-1 text-[24px] font-bold">Summary</h2>
        <ul className="pl-[62px]">
          {bullets.map(b => (
            <li key={b} className="mb-1 flex gap-2">
              <span className="mt-[10px] size-[10px] shrink-0 rounded-full bg-[#333]" />
              <span className="-mr-4">{b}</span>
            </li>
          ))}
        </ul>
        <div className="absolute inset-x-0 bottom-0 h-2 bg-linear-to-b from-transparent to-[#f0f0f0]" />
      </div>

      <div className="mt-[17px] mb-[38px] flex h-40 shrink-0 rounded-2xl bg-white">
        <textarea aria-label="Etwas fragen" placeholder="Etwas fragen" className="flex-1 resize-none bg-transparent pt-[27px] pl-[18px] text-[25px] leading-[34px] outline-none placeholder:text-[#9b9b9b]" />
        <div className="flex flex-col items-center gap-11 pt-8 pr-6">
          <button aria-label="Vorschläge">
            <svg viewBox="0 0 32 32" className="size-8" fill="none" stroke="#333" strokeWidth="2"><path d="M12.500 26q0-3-2-5q-3-3-3-6a8.500 8.500 0 0 1 17 0q0 3-3 6q-2 2-2 5zM13 30.500h6M16 0v4M1 14h4M27 14h4M5 4l3 3M27 4l-3 3" /></svg>
          </button>
          <button aria-label="Senden">
            <svg viewBox="0 0 30 28" className="w-[30px]" fill="#965df5"><path d="M1 1Q1-1 3 0L29 12.500q1 1.500 0 3L3 27.500Q1 28 1 26V17L15 14 1 11z" /></svg>
          </button>
        </div>
      </div>
    </section>
  );
}

function RightRail() {
  return (
    <nav className="flex w-28 shrink-0 flex-col items-center gap-8 rounded-tr-[28px] bg-[#ebebeb] pt-[25px]">
      <RightTool i={0} />
      <Dash />
      {[1, 2, 3, 4, 5].map(i => <RightTool key={i} i={i} />)}
      <Dash />
      <RightTool i={6} />
      <div className="mt-auto mb-[21px] flex flex-col gap-8">
        <button aria-label="UPDF AI" className="flex size-12 items-center justify-center rounded-lg bg-white"><Clover className="size-[34px]" /></button>
        <button aria-label="Kommentare" className="size-12">
          <svg viewBox="0 0 48 48" className="size-12" fill="none" stroke="#333" strokeWidth="2" strokeLinejoin="round"><path d="M12 8h25q2 0 2 2v21q0 2-2 2h-8l-4.500 6-4.500-6h-8q-2 0-2-2V10q0-2 2-2zM15 16h18M15 21h18M15 26h11" /></svg>
        </button>
      </div>
    </nav>
  );
}

export default function App() {
  return (
    <div className={`h-screen overflow-hidden bg-[#a6a6a6] p-[2px] ${SANS}`}>
      <div className="flex h-full flex-col overflow-hidden rounded-[14px] bg-[#363636]">
        <TitleBar />
        <div className="mx-[30px] flex min-h-0 flex-1">
          <LeftRail />
          <Thumbnails />
          <Viewer />
          <AiPanel />
          <RightRail />
        </div>
      </div>
    </div>
  );
}
